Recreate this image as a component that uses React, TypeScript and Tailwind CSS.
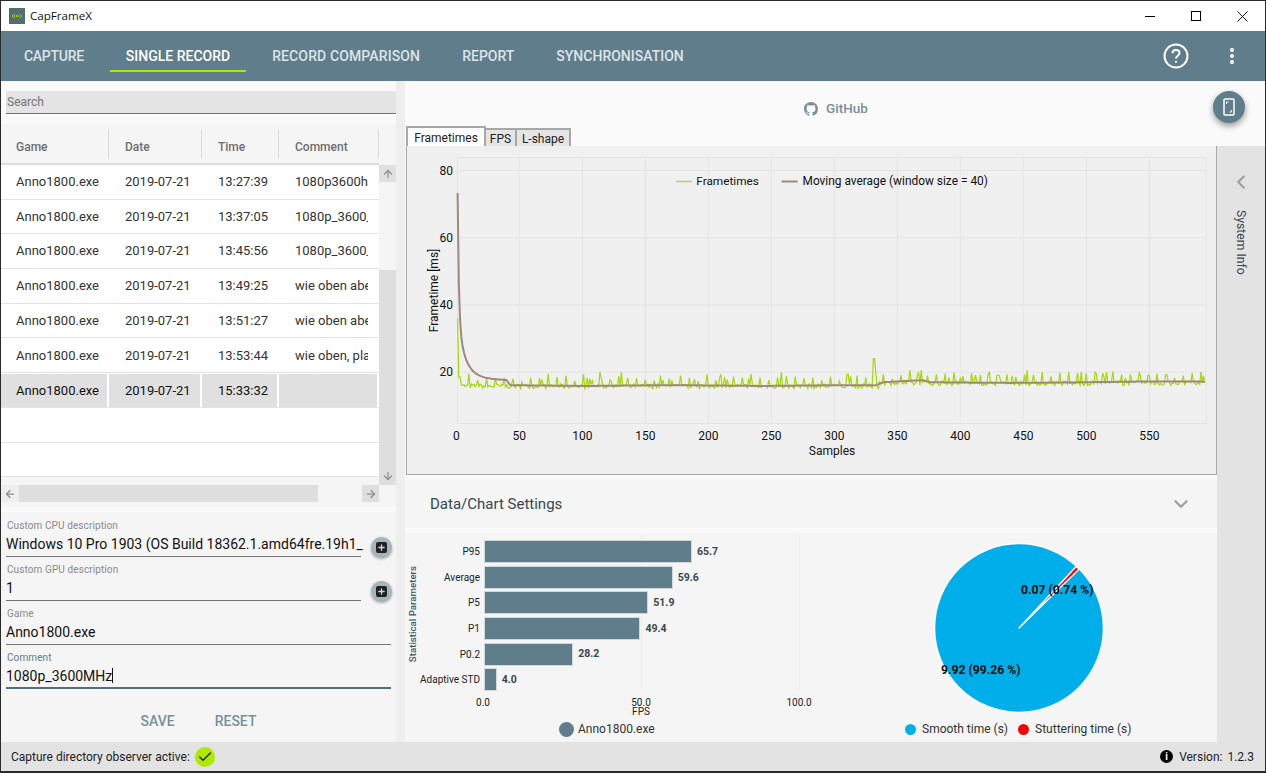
import { Check, ChevronDown, ChevronLeft, ArrowUp, ArrowDown, ArrowLeft, ArrowRight, Plus } from "lucide-react"

const tabs = ["CAPTURE", "SINGLE RECORD", "RECORD COMPARISON", "REPORT", "SYNCHRONISATION"]

const columns = ["w-[108px]", "w-[93px]", "w-[77px]", "w-[100px]"]

const rows = [
  ["Anno1800.exe", "2019-07-21", "13:27:39", "1080p3600h"],
  ["Anno1800.exe", "2019-07-21", "13:37:05", "1080p_3600_"],
  ["Anno1800.exe", "2019-07-21", "13:45:56", "1080p_3600_"],
  ["Anno1800.exe", "2019-07-21", "13:49:25", "wie oben aber"],
  ["Anno1800.exe", "2019-07-21", "13:51:27", "wie oben aber"],
  ["Anno1800.exe", "2019-07-21", "13:53:44", "wie oben, pla"],
  ["Anno1800.exe", "2019-07-21", "15:33:32", ""],
]

const bars = [
  { name: "P95", value: 65.7 },
  { name: "Average", value: 59.6 },
  { name: "P5", value: 51.9 },
  { name: "P1", value: 49.4 },
  { name: "P0.2", value: 28.2 },
  { name: "Adaptive STD", value: 4.0 },
]

// chart scale, taken from the axis ticks
const sx = (s: number) => 49.3 + s * 1.26
const sy = (v: number) => 24.5 + (80 - v) * 3.36

let seed = 7
const rnd = () => {
  seed = (seed * 16807) % 2147483647
  return seed / 2147483647
}

const frametimes: number[] = []
for (let i = 0; i < 595; i++) {
  let v = 15.1 + rnd() * 1.4
  if (i > 335) v += 0.9
  if (i % 7 === 3 || rnd() < 0.05) v += 1.8 + rnd() * 1.6
  if (i === 1) v = 36
  if (i === 2) v = 18.5
  if (i === 114 || i === 131 || i === 258 || i === 591) v = 20
  if (i === 331 || i === 332) v = 24
  if (i === 333) v = 19.5
  frametimes.push(v)
}

const average = (i: number) => {
  if (i < 40) return 17.6 + 0.8 * (1 - i / 40) + 20 * Math.exp(-i / 6) + 38 * Math.exp(1 - i)
  if (i < 43) return 17.6 - (i - 40) * 0.55
  if (i < 332) return 16 + Math.sin(i / 22) * 0.1
  if (i < 339) return 16 + ((i - 332) / 7) * 1
  if (i < 370) return 17 + ((i - 339) / 31) * 0.6
  if (i < 376) return 17.6 - (i - 370) * 0.1
  return 17 + Math.sin(i / 40) * 0.2
}

const toPath = (fn: (i: number) => number) =>
  Array.from({ length: 594 }, (_, k) => `${k ? "L" : "M"}${sx(k + 1).toFixed(1)} ${sy(fn(k + 1)).toFixed(1)}`).join("")

function FrametimeChart() {
  const xTicks = [0, 50, 100, 150, 200, 250, 300, 350, 400, 450, 500, 550]
  const yTicks = [20, 40, 60, 80]
  return (
    <svg width="809" height="327" className="block" style={{ fontFamily: "Roboto, sans-serif" }}>
      <rect x="50.5" y="11.5" width="748.5" height="266" fill="none" stroke="#e4e4e4" />
      {xTicks.map((t) => (
        <g key={t}>
          {t > 0 && <line x1={sx(t)} x2={sx(t)} y1="11" y2="277" stroke="#e4e4e4" />}
          <text x={sx(t)} y="294" textAnchor="middle" fontSize="12" fill="#111">{t}</text>
        </g>
      ))}
      {yTicks.map((t) => (
        <g key={t}>
          <line x1="50" x2="799" y1={sy(t)} y2={sy(t)} stroke="#e4e4e4" />
          <text x="46" y={sy(t) + 4} textAnchor="end" fontSize="12" fill="#111">{t}</text>
        </g>
      ))}
      <path d={toPath((i) => frametimes[i])} fill="none" stroke="#a4d80c" strokeWidth="1.2" />
      <path d={toPath(average)} fill="none" stroke="#a1887f" strokeWidth="2" />
      <line x1="269" x2="285" y1="35.5" y2="35.5" stroke="#b4d65c" strokeWidth="1.5" />
      <text x="289.3" y="39" fontSize="11.8" fill="#111">Frametimes</text>
      <line x1="374.7" x2="390.7" y1="35.5" y2="35.5" stroke="#a1887f" strokeWidth="2" />
      <text x="395.5" y="39" fontSize="11.9" fill="#111">Moving average (window size = 40)</text>
      <text x="425" y="309" textAnchor="middle" fontSize="12" fill="#111">Samples</text>
      <text transform="translate(31 144.5) rotate(-90)" textAnchor="middle" fontSize="12" fill="#111">Frametime [ms]</text>
    </svg>
  )
}

function FpsBars() {
  return (
    <div className="relative flex h-full">
      <div className="flex w-[14px] items-start justify-center ml-[1px] pt-[33px]">
        <span className="[writing-mode:vertical-rl] rotate-180 text-[9.7px] font-medium text-[#3c5a68] whitespace-nowrap">Statistical Parameters</span>
      </div>
      <div className="w-[58px] flex flex-col pt-[6px] ml-[2px]">
        {bars.map((b) => (
          <div key={b.name} className="h-[25.6px] flex items-center justify-end text-[10px] text-[#222] whitespace-nowrap">{b.name}</div>
        ))}
      </div>
      <div className="flex flex-col pt-[6px] ml-[4px]">
        {bars.map((b) => (
          <div key={b.name} className="h-[25.6px] flex items-center">
            <div className="h-[23px] bg-[#607d8b] border border-[#cfd8dc]" style={{ width: b.value * 3.166 }} />
            <span className="ml-[5px] text-[10.5px] font-bold text-[#37474f]">{b.value.toFixed(1)}</span>
          </div>
        ))}
      </div>
    </div>
  )
}

function Field({ label, value, accent, caret, action }: { label: string; value: string; accent?: boolean; caret?: boolean; action?: boolean }) {
  return (
    <div className="flex items-start h-[44px]">
      <div className={`flex-1 min-w-0 h-[44px] pl-[5px] ${action ? "mr-[10px]" : ""}`}>
        <div className={`h-[44px] ${accent ? "border-b-2 border-[#546e7a]" : "border-b border-[#757575]"}`}>
          <div className={`pl-[1px] pt-[6px] text-[10px] leading-[13px] tracking-[0.1px] ${accent ? "text-[#607d8b]" : "text-[#8a8a8a]"}`}>{label}</div>
          <div className="h-[22px] mt-[1px] text-[14px] leading-[22px] text-[#111] whitespace-nowrap">
            {value}
            {caret && <span className="inline-block w-px h-[15px] bg-[#111] align-[-2px]" />}
          </div>
        </div>
      </div>
      {action && (
        <div className="w-[21px] h-[21px] mt-[24px] mr-[4px] rounded-full bg-[#a6b5bc] shadow-[0_1px_3px_rgba(0,0,0,0.35)] flex items-center justify-center shrink-0">
          <div className="w-[11px] h-[11px] rounded-[2px] bg-[#222] flex items-center justify-center">
            <Plus size={9} strokeWidth={3.5} color="#cfd8dc" />
          </div>
        </div>
      )}
    </div>
  )
}

export default function App() {
  return (
    <div className="w-[1266px] h-[773px] flex flex-col overflow-hidden border border-[#2a2a2a] border-b-2 bg-[#eeeeee]" style={{ fontFamily: "Roboto, sans-serif" }}>
      {/* title bar */}
      <div className="h-[30px] shrink-0 bg-white flex items-center">
        <svg width="16" height="16" viewBox="0 0 16 16" className="ml-[8px]">
          <rect width="16" height="16" fill="#546e6e" />
          <path d="M3 8 L6 5 M3 8 L6 11 M13 8 L10 5 M13 8 L10 11" stroke="#c8d6c8" strokeWidth="1" strokeDasharray="1 1" />
          <path d="M5 8 H11" stroke="#a4d80c" strokeWidth="2" strokeDasharray="1 1" />
        </svg>
        <span className="ml-[5px] text-[11.6px] text-[#111]" style={{ fontFamily: "'Open Sans', sans-serif" }}>CapFrameX</span>
        <div className="ml-auto flex items-center h-full">
          <div className="w-[46px] flex justify-center"><div className="w-[10px] h-px bg-black" /></div>
          <div className="w-[46px] flex justify-center"><div className="w-[10px] h-[10px] border border-black" /></div>
          <div className="w-[46px] flex justify-center">
            <svg width="11" height="11" viewBox="0 0 11 11"><path d="M.5.5l10 10M10.5.5l-10 10" stroke="#111" fill="none" /></svg>
          </div>
        </div>
      </div>

      {/* nav */}
      <div className="h-[50px] shrink-0 bg-[#607d8b] flex items-stretch pl-[2px]">
        {tabs.map((t) => (
          <div key={t} className={`relative px-[21px] flex items-center text-[14px] font-medium ${t === "SINGLE RECORD" ? "text-white" : "text-[#dde4e8]"} ${t === "CAPTURE" ? "tracking-[-0.28px]" : ""} ${t === "RECORD COMPARISON" ? "tracking-[0.12px]" : ""}`}>
            {t}
            {t === "SINGLE RECORD" && <div className="absolute left-[5px] right-[5px] bottom-[9px] h-[2px] bg-[#aeea00]" />}
          </div>
        ))}
        <div className="ml-auto flex items-center">
          <svg width="26" height="26" viewBox="0 0 26 26" fill="none" stroke="white" strokeWidth="2">
            <circle cx="13" cy="13" r="11.5" />
            <path d="M9.5 10.2c0-2 1.6-3.3 3.5-3.3s3.5 1.3 3.5 3.2c0 2.6-3.5 2.8-3.5 5.4" />
            <circle cx="13" cy="18.8" r="0.7" fill="white" strokeWidth="1" />
          </svg>
          <div className="w-[4px] ml-[41px] mr-[31px] flex flex-col gap-[2px]">
            <div className="w-[4px] h-[4px] rounded-full bg-white" />
            <div className="w-[4px] h-[4px] rounded-full bg-white" />
            <div className="w-[4px] h-[4px] rounded-full bg-white" />
          </div>
        </div>
      </div>

      {/* body */}
      <div className="flex-1 min-h-0 flex">
        {/* left column */}
        <div className="w-[395px] shrink-0 flex flex-col bg-[#fafafa]">
          <div className="h-[43px] shrink-0 pl-[5px] pt-[10px]">
            <div className="h-[23px] bg-[#e4e4e4] border-b border-[#757575] text-[12px] leading-[22px] pl-[1px] text-[#757575]">Search</div>
          </div>
          <div className="h-[383px] shrink-0 bg-[#f5f5f5] flex flex-col">
            <div className="flex flex-1 min-h-0">
              <div className="w-[378px] flex flex-col">
                <div className="h-[41px] shrink-0 flex items-start pt-[5px] border-b-2 border-[#dcdcdc] text-[12px] font-medium text-[#6e6e6e]">
                  {["Game", "Date", "Time", "Comment"].map((h, j) => (
                    <div key={h} className={`${columns[j]} h-[30px] flex items-center pt-[6px] ${j ? "pl-[16px]" : "pl-[15px]"} border-r border-[#dcdcdc]`}>{h}</div>
                  ))}
                </div>
                <div className="flex-1">
                  <div className="bg-white">
                    {rows.map((r, i) => (
                      <div key={i} className="h-[34.7px] flex border-b border-[#e3e3e3] text-[13px] text-[#333]">
                        {r.map((c, j) => (
                          <div key={j} className={`${columns[j]} flex items-center whitespace-nowrap ${j ? "pl-[16px]" : "pl-[15px]"} ${i === 6 ? "bg-[#e0e0e0] border-t border-r-2 border-white text-[#111]" : ""}`}>
                            <span className={j === 3 ? "block w-[73px] overflow-hidden" : ""}>{c}</span>
                          </div>
                        ))}
                      </div>
                    ))}
                    <div className="h-[34.7px] border-b border-[#e3e3e3]" />
                    <div className="h-[34.7px] border-b border-[#e3e3e3]" />
                  </div>
                </div>
              </div>
              <div className="w-[17px] shrink-0 flex flex-col pt-[41px]">
                <div className="h-[17px] bg-[#e0e0e0] flex items-center justify-center"><ArrowUp size={12} color="#8f8f8f" strokeWidth={2.5} /></div>
                <div className="h-[88px]" />
                <div className="flex-1 bg-[#dedede] flex flex-col justify-end items-center"><ArrowDown size={12} color="#8f8f8f" strokeWidth={2.5} className="mb-[3px]" /></div>
              </div>
            </div>
            <div className="h-[17px] mb-[5px] shrink-0 flex">
              <div className="w-[18px] bg-[#eeeeee] flex items-center justify-center"><ArrowLeft size={12} color="#8f8f8f" strokeWidth={2.5} /></div>
              <div className="w-[299px] bg-[#dedede]" />
              <div className="w-[44px]" />
              <div className="w-[17px] bg-[#dedede] flex items-center justify-center"><ArrowRight size={12} color="#8f8f8f" strokeWidth={2.5} /></div>
            </div>
          </div>
          <div className="h-[5px] shrink-0 bg-[#fafafa]" />
          <div className="flex-1 bg-[#f5f5f5] flex flex-col pt-[1px]">
            <Field label="Custom CPU description" value="Windows 10 Pro 1903 (OS Build 18362.1.amd64fre.19h1_" action />
            <Field label="Custom GPU description" value="1" action />
            <div className="pr-[5px]">
              <Field label="Game" value="Anno1800.exe" />
              <Field label="Comment" value="1080p_3600MHz" accent caret />
            </div>
            <div className="flex justify-center gap-[40px] mt-[22px] text-[14px] font-medium text-[#78909c]">
              <span>SAVE</span>
              <span>RESET</span>
            </div>
          </div>
        </div>

        <div className="w-[9px] shrink-0 bg-[#eeeeee]" />

        {/* right column */}
        <div className="flex-1 min-w-0 flex">
          <div className="w-[812px] shrink-0 flex flex-col bg-[#fafafa]">
            <div className="h-[45px] shrink-0 flex items-center justify-center text-[13.5px] font-medium text-[#78909c] gap-[8px] pt-[10px] pl-[50px]">
              <svg width="14" height="14" viewBox="0 0 16 16" fill="#78909c">
                <path d="M8 0C3.58 0 0 3.58 0 8c0 3.54 2.29 6.53 5.47 7.59.4.07.55-.17.55-.38 0-.19-.01-.82-.01-1.49-2.01.37-2.53-.49-2.69-.94-.09-.23-.48-.94-.82-1.13-.28-.15-.68-.52-.01-.53.63-.01 1.08.58 1.23.82.72 1.21 1.87.87 2.33.66.07-.52.28-.87.51-1.07-1.78-.2-3.64-.89-3.64-3.95 0-.87.31-1.59.82-2.15-.08-.2-.36-1.02.08-2.12 0 0 .67-.21 2.2.82.64-.18 1.32-.27 2-.27s1.36.09 2 .27c1.53-1.04 2.2-.82 2.2-.82.44 1.1.16 1.92.08 2.12.51.56.82 1.27.82 2.15 0 3.07-1.87 3.75-3.65 3.95.29.25.54.73.54 1.48 0 1.07-.01 1.93-.01 2.2 0 .21.15.46.55.38A8.01 8.01 0 0 0 16 8c0-4.42-3.58-8-8-8z" />
              </svg>
              GitHub
            </div>
            {/* chart tabs */}
            <div className="h-[21px] shrink-0 flex items-end pl-[1px] text-[12px] text-[#222]">
              <div className="h-[21px] w-[80px] border-2 border-b-0 border-[#a8a8a8] bg-white flex items-center justify-center">Frametimes</div>
              <div className="h-[19px] w-[31px] border-2 border-l-0 border-b-0 border-[#a8a8a8] bg-[#e5e5e5] flex items-center justify-center">FPS</div>
              <div className="h-[19px] w-[54px] border-2 border-l-0 border-b-0 border-[#a8a8a8] bg-[#e5e5e5] flex items-center justify-center">L-shape</div>
              <div className="flex-1 border-b border-[#a8a8a8]" />
            </div>
            <div className="h-[329px] shrink-0 ml-[1px] bg-[#f0f0f0] border-l border-r border-b border-[#a8a8a8] -mt-px">
              <FrametimeChart />
            </div>
            <div className="h-[5px] shrink-0 bg-[#fafafa]" />
            <div className="h-[48px] shrink-0 flex items-center justify-between pl-[25px] pr-[25px] text-[15px] text-[#37474f] bg-[#f5f5f5]">
              Data/Chart Settings
              <ChevronDown size={22} color="#9e9e9e" strokeWidth={2.5} />
            </div>
            <div className="h-[5px] shrink-0 bg-[#fafafa]" />
            <div className="flex-1 min-h-0 bg-[#f5f5f5] flex">
              <div className="relative w-[450px] shrink-0">
                <div className="absolute left-[236px] top-[2px] h-[155px] w-px bg-[#eeeeee]" />
                <div className="absolute left-[394px] top-[2px] h-[155px] w-px bg-[#eeeeee]" />
                <FpsBars />
                <div className="absolute top-[165px] left-[78px] -translate-x-1/2 text-[10px] leading-[10px] text-[#222]">0.0</div>
                <div className="absolute top-[165px] left-[236px] -translate-x-1/2 text-[10px] leading-[9px] text-[#222] text-center">50.0<br />FPS</div>
                <div className="absolute top-[165px] left-[394px] -translate-x-1/2 text-[10px] leading-[10px] text-[#222]">100.0</div>
                <div className="absolute top-[187px] left-[154px] flex items-center gap-[4px] text-[12px] text-[#333]">
                  <div className="w-[15px] h-[15px] rounded-full bg-[#607d8b]" />
                  Anno1800.exe
                </div>
              </div>
              <div className="relative flex-1">
                <svg width="172" height="172" viewBox="0 0 172 172" className="absolute left-[78px] top-[9px]">
                  <circle cx="86" cy="86" r="84.5" fill="#00aeea" stroke="white" strokeWidth="1.5" />
                  <path d="M86 86 L143.2 24.5 L146 27.2 Z" fill="#ff0000" stroke="white" strokeWidth="1.4" strokeLinejoin="round" />
                </svg>
                <div className="absolute left-[166px] top-[48px] text-[12.2px] font-bold text-[#111] whitespace-nowrap">0.07 (0.74 %)</div>
                <div className="absolute left-[86px] top-[128px] text-[12.2px] font-bold text-[#111] whitespace-nowrap">9.92 (99.26 %)</div>
                <div className="absolute top-[187px] left-[50px] flex items-center gap-[6px] text-[12px] text-[#333] whitespace-nowrap">
                  <div className="w-[11px] h-[11px] rounded-full bg-[#00aeea] ring-1 ring-white" />
                  Smooth time (s)
                  <div className="w-[11px] h-[11px] rounded-full bg-[#ff0000] ring-1 ring-white ml-[4px]" />
                  Stuttering time (s)
                </div>
              </div>
            </div>
          </div>

          {/* side tab */}
          <div className="flex-1 flex flex-col">
            <div className="h-[65px] bg-[#fafafa] relative">
              <div className="absolute left-[-4px] top-[10px] w-[32px] h-[32px] rounded-full bg-[#607d8b] shadow-[0_3px_6px_rgba(0,0,0,0.4)] flex items-center justify-center">
                <svg width="12" height="18" viewBox="0 0 12 18" fill="none" stroke="white" strokeWidth="1.5">
                  <rect x="1" y="1" width="10" height="16" rx="1" />
                  <path d="M3.5 6V4h2M8.5 12v2h-2" strokeWidth="1" />
                </svg>
              </div>
            </div>
            <div className="flex-1 bg-[#e3e3e3] flex flex-col items-center pt-[25px]">
              <ChevronLeft size={22} color="#9e9e9e" strokeWidth={2.5} />
              <span className="mt-[17px] [writing-mode:vertical-rl] text-[12.2px] text-[#37474f]">System Info</span>
            </div>
          </div>
        </div>
      </div>

      {/* status bar */}
      <div className="h-[29px] shrink-0 bg-[#e3e3e3] flex items-center pl-[10px] pr-[11px] text-[12px] text-[#222]">
        Capture directory observer active:
        <div className="ml-[5px] w-[20px] h-[20px] rounded-full bg-[#aeea00] flex items-center justify-center">
          <Check size={16} color="#222" strokeWidth={2} />
        </div>
        <div className="ml-auto flex items-center">
          <div className="w-[13px] h-[13px] rounded-full bg-black text-white text-[10px] font-bold leading-[13px] text-center mr-[6px]">i</div>
          Version:<span className="ml-[5px]">1.2.3</span>
        </div>
      </div>
    </div>
  )
}
